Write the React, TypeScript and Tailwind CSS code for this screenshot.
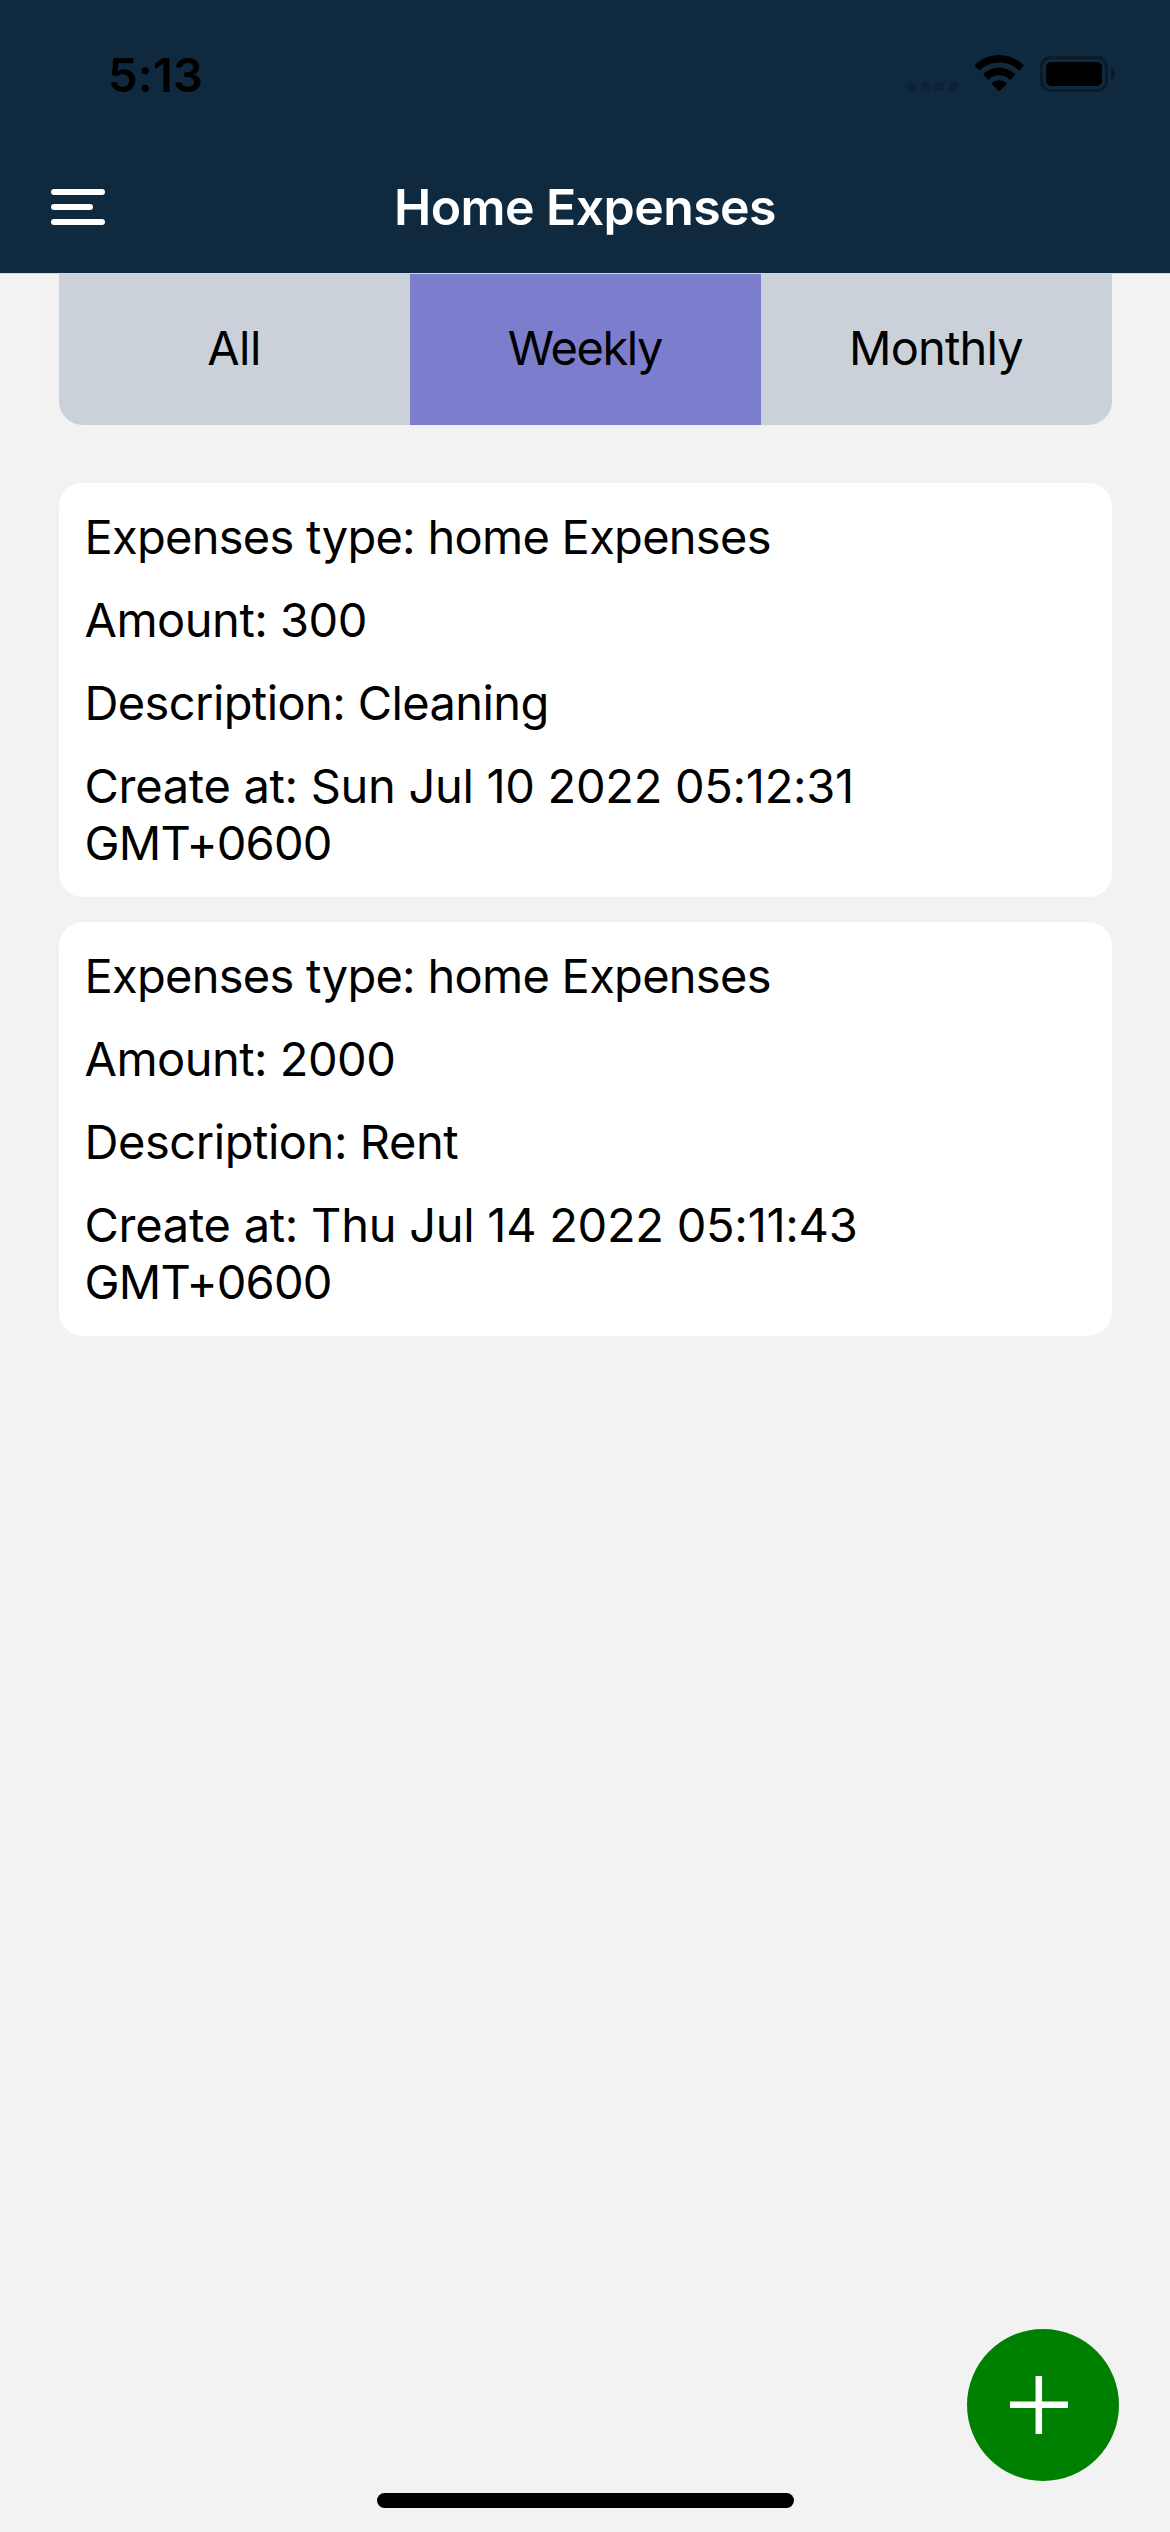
type Line = { text: string; tracking: string; zone?: string };

const tabs = [
  { label: "All", className: "bg-[#cad1d9] tracking-[-0.6px]", active: false },
  { label: "Weekly", className: "bg-[#7d7dce] tracking-[-1.37px]", active: true },
  { label: "Monthly", className: "bg-[#cad1d9] tracking-[-0.81px]", active: false },
];

const expenses: Line[][] = [
  [
    { text: "Expenses type: home Expenses", tracking: "tracking-[-0.72px]" },
    { text: "Amount: 300", tracking: "tracking-[-0.49px]" },
    { text: "Description: Cleaning", tracking: "tracking-[-0.6px]" },
    { text: "Create at: Sun Jul 10 2022 05:12:31", tracking: "tracking-[-0.3px]", zone: "GMT+0600" },
  ],
  [
    { text: "Expenses type: home Expenses", tracking: "tracking-[-0.72px]" },
    { text: "Amount: 2000", tracking: "tracking-[-0.52px]" },
    { text: "Description: Rent", tracking: "tracking-[-0.44px]" },
    { text: "Create at: Thu Jul 14 2022 05:11:43", tracking: "tracking-[-0.27px]", zone: "GMT+0600" },
  ],
];

function WifiIcon() {
  return (
    <svg width="49" height="37" viewBox="0 0 49 37" className="ml-[17px]">
      <path d="M24.2 0C33.6 0 42.2 3.8 48.4 10c.4.4.4.8 0 1.2l-3.6 3.9c-.5.5-.9.5-1.4 0C38.2 10.3 31.5 7.6 24.2 7.6S10.2 10.3 5 15.1c-.5.5-.9.5-1.4 0L0 11.2c-.4-.4-.4-.8 0-1.2C6.2 3.8 14.8 0 24.2 0Z" />
      <path d="M24.2 12.7c6 0 11.5 2.3 15.6 6 .5.4.5.9 0 1.3l-4 4.3c-.4.5-.9.5-1.3.1C31.7 21.8 28.1 20.3 24.2 20.3s-7.5 1.500-10.300 4.100c-.4.4-.9.4-1.300-.1l-4-4.300c-.5-.4-.5-.9 0-1.300 4.100-3.700 9.600-6 15.600-6Z" />
      <path d="M24.2 25.3c2.700 0 5.200 1 7.100 2.700.4.4.4.8 0 1.200L25 35.700c-.5.5-1.100.5-1.600 0L17.100 29.200c-.4-.4-.4-.8 0-1.200 1.900-1.700 4.400-2.700 7.100-2.700Z" />
    </svg>
  );
}

function BatteryIcon() {
  return (
    <svg width="76" height="36" viewBox="0 0 76 36" className="ml-4">
      <rect x="1.5" y="1.5" width="65" height="33" rx="9.5" fill="none" stroke="#0a1b29" strokeWidth="3" />
      <rect x="6" y="6" width="56" height="24" rx="5" />
      <path d="M71 11.5c2.500 1 4 3.500 4 6.500s-1.500 5.500-4 6.500Z" fill="#0a1b29" />
    </svg>
  );
}

function StatusBar() {
  return (
    <div className="flex h-[147px] items-start pl-[108px] pr-[54px]">
      <time className="mt-[46px] text-[47px] leading-[57px] font-semibold tracking-[0.2px] text-black">5:13</time>
      <div className="ml-auto flex">
        <div className="mt-[82px] flex gap-[5px]">
          {[0, 1, 2, 3].map((i) => (
            <span key={i} className="size-[9px] rounded-[3px] bg-[#0c2236]" />
          ))}
        </div>
        <div className="mt-[55px]">
          <WifiIcon />
        </div>
        <div className="mt-[56px]">
          <BatteryIcon />
        </div>
      </div>
    </div>
  );
}

export default function App() {
  return (
    <div className="relative flex h-[2532px] w-[1170px] flex-col overflow-hidden bg-[#f2f2f2] font-['Inter',sans-serif] text-black">
      <header className="h-[274px] border-b border-[#d5d8dc] bg-[#0f2a3f]">
        <StatusBar />
        <div className="grid grid-cols-[1fr_auto_1fr] items-start">
          <button aria-label="Menu" className="mt-[42px] ml-[51px] flex w-[54px] flex-col gap-[9px]">
            <span className="h-1.5 w-full rounded-full bg-white" />
            <span className="h-1.5 w-[42px] rounded-full bg-white" />
            <span className="h-1.5 w-full rounded-full bg-white" />
          </button>
          <h1 className="mt-[30px] text-[50px] leading-[60px] font-semibold tracking-[-0.58px] text-white">Home Expenses</h1>
        </div>
      </header>

      <nav className="mx-auto flex w-[1053px] overflow-hidden rounded-b-3xl">
        {tabs.map((tab) => (
          <button
            key={tab.label}
            aria-pressed={tab.active}
            className={`flex h-[151px] flex-1 justify-center pt-[45px] text-[47px] leading-[57px] ${tab.className}`}
          >
            {tab.label}
          </button>
        ))}
      </nav>

      <main className="mx-auto mt-[58px] flex w-[1053px] flex-col gap-[25px]">
        {expenses.map((lines, i) => (
          <article key={i} className="flex h-[414px] flex-col gap-[26px] rounded-3xl bg-white pt-[25px] pr-[150px] pl-[26px]">
            {lines.map((line) => (
              <p key={line.text} className={`text-[47px] leading-[57px] ${line.tracking}`}>
                {line.text}
                {line.zone && <span className="tracking-[-0.81px]"> {line.zone}</span>}
              </p>
            ))}
          </article>
        ))}
      </main>

      <button
        aria-label="Add expense"
        className="absolute right-[51px] bottom-[51px] size-[152px] rounded-full bg-[#008000]"
      >
        <svg viewBox="0 0 152 152" className="size-full">
          <path d="M43 75.700H101M71.800 47V105" stroke="white" strokeWidth="6.5" fill="none" />
        </svg>
      </button>
      <div className="absolute bottom-6 left-[377px] h-[15px] w-[417px] rounded-full bg-black" />
    </div>
  );
}
